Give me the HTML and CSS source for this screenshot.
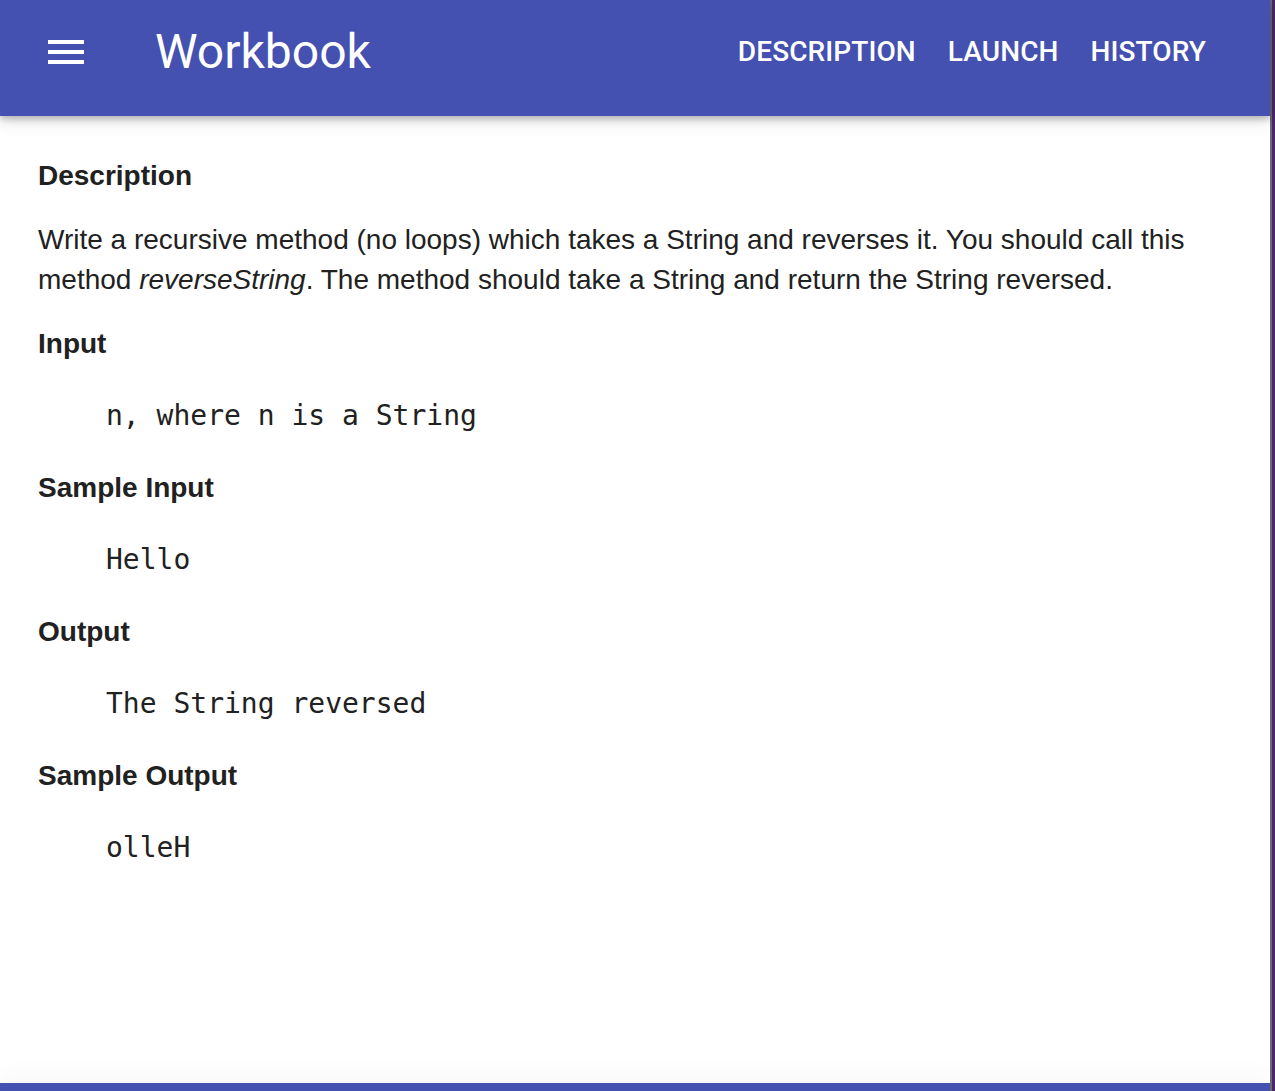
FILE: index.html
```html
<!DOCTYPE html>
<html lang="en">
<head>
<meta charset="utf-8">
<title>Workbook</title>
<link rel="stylesheet" href="styles.css">
</head>
<body>
<div class="app">
  <header class="topbar">
    <div class="topbar-left">
      <button class="menu-btn" aria-label="Menu">
        <svg class="menu-icon" viewBox="0 0 24 24" width="48" height="48"><path fill="#fff" d="M3 18h18v-2H3v2zm0-5h18v-2H3v2zm0-7v2h18V6H3z"/></svg>
      </button>
      <h1 class="title">Workbook</h1>
    </div>
    <nav class="nav">
      <a class="nav-link">DESCRIPTION</a>
      <a class="nav-link">LAUNCH</a>
      <a class="nav-link">HISTORY</a>
    </nav>
  </header>
  <main class="content">
    <h3 class="sec-title">Description</h3>
    <p class="para">Write a recursive method (no loops) which takes a String and reverses it. You should call this method <em>reverseString</em>. The method should take a String and return the String reversed.</p>
    <h3 class="sec-title">Input</h3>
    <pre class="code">n, where n is a String</pre>
    <h3 class="sec-title">Sample Input</h3>
    <pre class="code">Hello</pre>
    <h3 class="sec-title">Output</h3>
    <pre class="code">The String reversed</pre>
    <h3 class="sec-title">Sample Output</h3>
    <pre class="code">olleH</pre>
  </main>
  <footer class="bottombar"></footer>
</div>
</body>
</html>
```

FILE: styles.css
```css
html, body {
  margin: 0;
  padding: 0;
  height: 100%;
}
body {
  background: #4b276d;
  overflow: hidden;
}
.app {
  width: 1270px;
  height: 1091px;
  background: #ffffff;
  border-right: 2px solid #6d6b72;
  display: flex;
  flex-direction: column;
}
.topbar {
  height: 116px;
  flex: none;
  background: #4451b0;
  display: flex;
  align-items: center;
  justify-content: space-between;
  padding: 0 64px 0 42px;
  box-shadow: 0 3px 6px rgba(0,0,0,0.22), 0 6px 14px rgba(0,0,0,0.12);
  position: relative;
  z-index: 2;
}
.topbar-left {
  display: flex;
  align-items: center;
  margin-top: -12px;
}
.menu-btn {
  background: none;
  border: 0;
  padding: 0;
  width: 48px;
  height: 48px;
  display: flex;
}
.title {
  margin: 0 0 0 65px;
  font-family: Roboto, "Liberation Sans", sans-serif;
  font-weight: 400;
  font-size: 48px;
  color: #ffffff;
  line-height: 56px;
}
.nav {
  display: flex;
  gap: 32px;
  margin-top: -13px;
}
.nav-link {
  font-family: Roboto, "Liberation Sans", sans-serif;
  font-weight: 500;
  font-size: 28px;
  color: #ffffff;
  letter-spacing: 0.1px;
  line-height: 32px;
}
.content {
  flex: 1;
  padding: 40px 38px 0 38px;
  color: #212121;
  font-family: "Liberation Sans", Arial, sans-serif;
}
.sec-title {
  margin: 0;
  font-size: 28px;
  font-weight: 700;
  line-height: 40px;
}
.para {
  margin: 24px 0;
  font-size: 28px;
  line-height: 40px;
}
.code {
  margin: 32px 0 32px 68px;
  font-family: "DejaVu Sans Mono", "Liberation Mono", monospace;
  font-size: 28px;
  line-height: 40px;
  color: #212121;
}
.bottombar {
  flex: none;
  height: 8px;
  background: #4451b0;
  box-shadow: 0 -4px 22px rgba(0,0,0,0.08);
}
```
